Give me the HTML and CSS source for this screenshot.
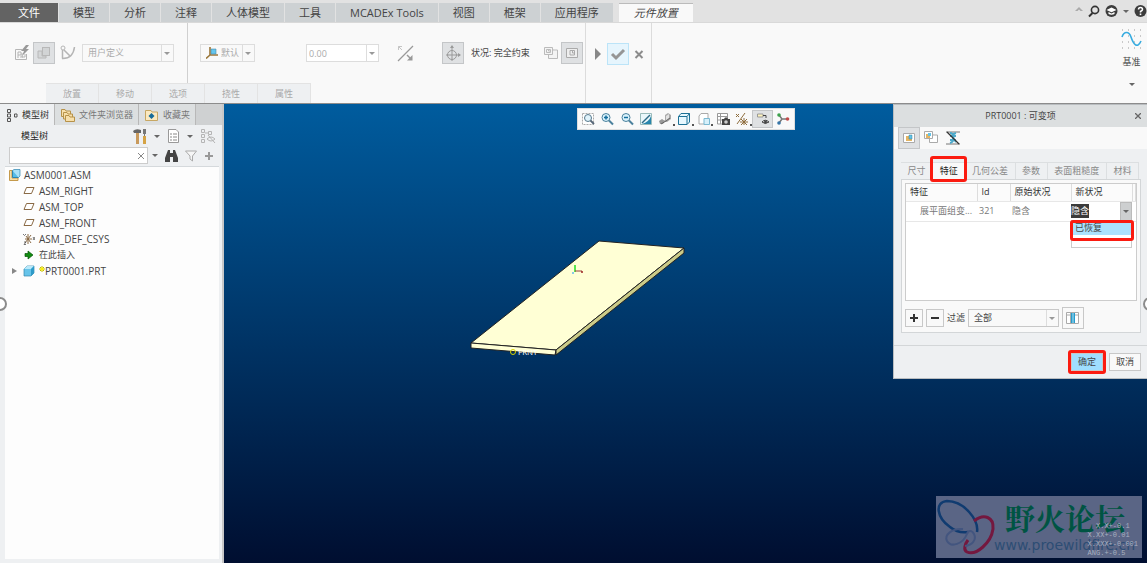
FILE: index.html
```html
<!DOCTYPE html>
<html lang="zh-CN">
<head>
  <meta charset="UTF-8">
  <meta name="viewport" content="width=device-width, initial-scale=1.0">
  <title>PRT0001 : 可变项</title>
  <link rel="stylesheet" href="styles.css">
</head>
<body>
  <header class="menubar">
    <nav class="menu">
      <button class="menu-tab file">文件</button>
      <button class="menu-tab">模型</button>
      <button class="menu-tab">分析</button>
      <button class="menu-tab">注释</button>
      <button class="menu-tab">人体模型</button>
      <button class="menu-tab">工具</button>
      <button class="menu-tab">MCADEx Tools</button>
      <button class="menu-tab">视图</button>
      <button class="menu-tab">框架</button>
      <button class="menu-tab">应用程序</button>
      <button class="menu-tab current">元件放置</button>
    </nav>
    <div class="menu-icons">
      <svg width="8" height="12"><path d="M0 6L4 2L8 6H5.500L4 4.500L2.500 6Z" fill="#aaa"/></svg>
      <svg width="12" height="14"><circle cx="7" cy="6" r="3.600" fill="none" stroke="#333" stroke-width="1.600"/><path d="M4.500 9L1 12.500" stroke="#333" stroke-width="2"/></svg>
      <svg width="13" height="14"><circle cx="6.500" cy="7" r="6" fill="#3c3c3c"/><path d="M1.500 6L6.500 3.500L11.500 6L6.500 8.300Z" fill="#fff"/><path d="M3.500 8V10Q6.500 11.500 9.500 10V8L6.500 9.500Z" fill="#fff"/></svg>
      <span class="arrow"></span>
      <svg width="13" height="14"><circle cx="6.500" cy="7" r="6" fill="#3c3c3c"/><path d="M4.500 5.500Q4.500 3.500 6.500 3.500T8.500 5.500Q8.500 6.500 6.500 7.500V8.500" fill="none" stroke="#fff" stroke-width="1.500"/><rect x="5.700" y="9.500" width="1.600" height="1.600" fill="#fff"/></svg>
    </div>
  </header>

  <section class="ribbon">
    <div class="placement">
      <div class="tools">
        <div class="group component">
          <svg width="16" height="16" fill="none" stroke="#b5b5b5"><path d="M1.500 4.500H8M1.500 4.500V14.500H12.500V9M4 7V13M4 7H7V10H4M8 8V12H11V9M6 12H9"/><path d="M12 0L7 6H10L8 11L15 4H12L15 0Z" fill="#999" stroke="none"/></svg>
          <button class="tool on" aria-label="界面放置"><svg width="16" height="16"><path d="M2 6H6V11H10V13H2Z" fill="#d5d7d8" stroke="#b8b8b8"/><rect x="6.500" y="2.500" width="7" height="8" fill="#d2d4d5" stroke="#b8b8b8"/></svg></button>
          <svg class="gap-s" width="16" height="16" fill="none" stroke="#b5b5b5"><circle cx="3" cy="3" r="2"/><path d="M2.500 5V13.500M4 5L10 11M2 13.500Q13 14 14.500 2" stroke-width="1.500"/></svg>
          <span class="combo user"><select disabled aria-label="约束集"><option>用户定义</option></select></span>
        </div>
        <div class="group constraint">
          <span class="combo auto">
            <svg width="12" height="12"><path d="M4 0V8L0 11.500M4 8H12" fill="none" stroke="#9a7638" stroke-width="1.600"/><path d="M5 2H10V7H5Z" fill="#64c6ee" stroke="#4a8aa8" stroke-width=".6"/></svg>
            <select disabled aria-label="约束类型"><option>默认</option></select>
          </span>
          <span class="combo offset"><input type="text" value="0.00" disabled aria-label="偏移"></span>
          <svg class="flip" width="17" height="17" stroke="#999"><path d="M1 16L16 1" stroke-width="1.300"/><path d="M1.500 1.500L5 5M1.500 5V1.500H5" stroke="#c5c5c5" fill="none"/><path d="M10 10L14 14" stroke-width="1.500"/><path d="M15.500 10V15.500H10Z" fill="#999" stroke="none"/></svg>
          <button class="tool on" aria-label="3D 拖动器"><svg width="18" height="18" fill="none" stroke="#999"><circle cx="8" cy="11" r="4.500"/><path d="M8 2V17M2 11H16"/><path d="M6 4L8 1L10 4ZM14 9L17 11L14 13Z" fill="#999" stroke="none"/></svg></button>
          <span class="status">状况: 完全约束</span>
          <svg class="windows" width="16" height="16" fill="#f4f4f4" stroke="#bbb"><path d="M5.500 3.500H9L10 5H14.500V13.500H5.500Z"/><path d="M1.500 2.500H9.500V9.500H1.500Z"/><path d="M3.500 4.500H7.500V7.500H3.500ZM5.500 4.500V6H7.500"/></svg>
          <button class="tool on" aria-label="装配窗口"><svg width="16" height="16" fill="none" stroke="#aaa"><path d="M2.500 3.500H13.500V12.500H2.500Z" fill="#eee"/><path d="M6 5.500H10.500V10H6ZM8.500 5.500V8H10.500"/></svg></button>
        </div>
      </div>
      <div class="subtabs">
        <button disabled>放置</button>
        <button disabled>移动</button>
        <button disabled>选项</button>
        <button disabled>挠性</button>
        <button disabled>属性</button>
      </div>
    </div>
    <div class="confirm">
      <svg width="8" height="12"><path d="M1 0L7 6L1 12Z" fill="#888"/></svg>
      <button class="tool accept" aria-label="应用"><svg width="16" height="14"><path d="M2 7L6 11L14 3" fill="none" stroke="#959595" stroke-width="3"/></svg></button>
      <svg width="10" height="10"><path d="M1.500 2L8.500 9M8.500 2L1.500 9" stroke="#8c8c8c" stroke-width="2"/></svg>
    </div>
    <div class="datum">
      <svg width="21" height="20"><path d="M1 1H21M1 7H21M1 13H21M1 19H21" stroke="#999" stroke-dasharray="1 5"/><path d="M1 8C3 2 8 2 10 8S16 21 20 12" fill="none" stroke="#38ace0" stroke-width="1.600"/></svg>
      <span>基准</span>
      <span class="arrow"></span>
    </div>
  </section>

  <main class="workspace">
    <aside class="navigator">
      <div class="nav-tabs">
        <button class="nav-tab active"><svg width="12" height="14" fill="none" stroke="#555"><path d="M1.500 1.500H4.500V4.500H1.500ZM1.500 6H4.500V9H1.500ZM1.500 10.500H4.500V13.500H1.500ZM8.500 6H11V9H8.500Z"/></svg>模型树</button>
        <button class="nav-tab"><svg width="14" height="14" fill="#f7dfaa" stroke="#b79249"><path d="M.5 1.500H4L5 3H9.500V8.500H.5Z"/><path d="M2.500 4.500H6L7 6H11.500V11H2.500Z"/><path d="M4.500 7.500H8L9 9H13.500V13.500H4.500Z"/></svg>文件夹浏览器</button>
        <button class="nav-tab"><svg width="14" height="14"><path d="M.5 2.500H6L7 4H12.500V12.500H.5Z" fill="#fae9c0" stroke="#c7a763"/><path d="M6.500 5L9.500 8L6.500 11L3.500 8Z" fill="#176b99"/></svg>收藏夹</button>
      </div>
      <div class="tree-title">
        <span>模型树</span>
        <div class="tree-tools">
          <svg width="14" height="17"><path d="M3 3H6V16H3Z" fill="#c99a5c"/><path d="M0 3Q3 0 8 2V5H1Z" fill="#666"/><path d="M10 1H13V6H12V9H11V6H10Z" fill="#777"/><rect x="10" y="8" width="3" height="8" fill="#d5a344"/></svg>
          <span class="arrow"></span>
          <svg width="13" height="16"><path d="M1.500 1.500H9L11.500 4V14.500H1.500Z" fill="#fff" stroke="#999"/><path d="M3 6H5M6 6H10M3 9H5M6 9H10M3 12H5M6 12H10" stroke="#888"/></svg>
          <span class="arrow"></span>
          <svg width="16" height="16" fill="none" stroke="#b5b5b5"><path d="M1.500 1.500H4.500V4.500H1.500ZM1.500 6.500H4.500V9.500H1.500ZM1.500 11.500H4.500V14.500H1.500ZM8.500 3.500H11.500V6.500H8.500ZM5 5H8M7 11Q11 7 15 11Q11 15 7 11M8 7L15 15"/></svg>
        </div>
      </div>
      <div class="search">
        <input type="text" aria-label="搜索模型树">
        <svg class="clear" width="8" height="8"><path d="M1 1L7 7M7 1L1 7" stroke="#888"/></svg>
        <span class="arrow"></span>
        <svg width="13" height="12"><path d="M3 0H5V3H8V0H10L13 8V12H8V7H5V12H0V8Z" fill="#444"/></svg>
        <svg width="12" height="12"><path d="M.5 1H11.500L7.500 6V11L5 9V6Z" fill="#f6f6f6" stroke="#aaa"/></svg>
        <svg width="10" height="10"><path d="M5 1V9M1 5H9" stroke="#999" stroke-width="2"/></svg>
      </div>
      <ul class="tree">
        <li class="root"><svg width="12" height="12"><path d="M.5 1.500H3V9H9V11.500H.5Z" fill="#f5dfaa" stroke="#c59a4b"/><path d="M3.500 1.500H9.500V8.500H3.500Z" fill="#55bce7" stroke="#3084ad"/><path d="M3.500 1.500L5 .5H11V7L9.500 8.500" fill="#a8e1f7" stroke="#3084ad" stroke-width=".7"/></svg>ASM0001.ASM</li>
        <li><svg width="12" height="10"><path d="M3.500 1.500H11L8.500 7.500H1Z" fill="#fff" stroke="#8a6a45"/></svg>ASM_RIGHT</li>
        <li><svg width="12" height="10"><path d="M3.500 1.500H11L8.500 7.500H1Z" fill="#fff" stroke="#8a6a45"/></svg>ASM_TOP</li>
        <li><svg width="12" height="10"><path d="M3.500 1.500H11L8.500 7.500H1Z" fill="#fff" stroke="#8a6a45"/></svg>ASM_FRONT</li>
        <li><svg width="12" height="12" stroke="#8a6a45"><path d="M2 6H9M5 1V11M2 10L8 2M3 3L8 10"/><path d="M0 1L1.500 2.500L3 1M1 9H3L1 11.500H3M10 4L12 7M12 4L10 7" fill="none" stroke="#555" stroke-width=".8"/></svg>ASM_DEF_CSYS</li>
        <li class="insert"><svg width="12" height="10"><path d="M2 3.500H5V1L10 5L5 9V6.500H2Z" fill="#128c12" stroke="#075507" stroke-width=".7"/></svg>在此插入</li>
        <li class="part"><span class="expand"></span><svg width="12" height="12"><path d="M1 4L4 1H11V8L8 11H1Z" fill="#67c4ea" stroke="#3488ae" stroke-width=".7"/><path d="M1 4L4 1H11L8 4Z" fill="#b9e9fa"/><path d="M8 4L11 1V8L8 11Z" fill="#2e9bc9"/></svg><svg class="star" width="6" height="10"><path d="M3 0V6M0 3H6M1 1L5 5M5 1L1 5" stroke="#c4bb00"/><circle cx="3" cy="3" r="1.500" fill="#fff200"/></svg>PRT0001.PRT</li>
      </ul>
      <span class="grip left"></span>
    </aside>

    <section class="viewport">
      <div class="view-tools">
        <button aria-label="重新调整"><svg width="14" height="14"><path d="M1.500 1.500H12.500V12.500H1.500Z" fill="#fff" stroke="#aaa" stroke-dasharray="2 1"/><circle cx="7" cy="6" r="3.500" fill="#e0f3fb" stroke="#56788c"/><path d="M9.500 8.500L13 12" stroke="#567" stroke-width="1.800"/></svg></button>
        <button aria-label="放大"><svg width="14" height="14"><circle cx="6" cy="5.500" r="4" fill="#d9f2fc" stroke="#4b819d"/><path d="M9 8.500L13 12.500" stroke="#4b819d" stroke-width="2"/><path d="M4 5.500H8M6 3.500V7.500" stroke="#126d9d" stroke-width="1.500"/></svg></button>
        <button aria-label="缩小"><svg width="14" height="14"><circle cx="6" cy="5.500" r="4" fill="#d9f2fc" stroke="#4b819d"/><path d="M9 8.500L13 12.500" stroke="#4b819d" stroke-width="2"/><path d="M4 5.500H8" stroke="#126d9d" stroke-width="1.500"/></svg></button>
        <button aria-label="重画"><svg width="14" height="14"><path d="M1.500 1.500H12.500V12.500H1.500Z" fill="#eaf7fb" stroke="#9bb"/><path d="M12 4V12H3Q10 10 12 4" fill="#2785ad"/><path d="M3 11L11 3" stroke="#2c6a86" stroke-width="1.500"/></svg></button>
        <button class="more" aria-label="渲染"><svg width="14" height="14"><path d="M7 3L10 1L13 3V7L9 10H5L7 8Z" fill="#aaa"/><path d="M8 4L11 2V6L8 8Z" fill="#e2e2e2"/><path d="M1 9L4 7L7 9L5 12H2Z" fill="#999"/><path d="M3 12L8 9L12 6" stroke="#666" fill="none"/></svg></button>
        <button class="more" aria-label="显示样式"><svg width="14" height="14" fill="#e7f8ff" stroke="#1d7196"><path d="M1.500 4.500L4 1.500H12.500V10L10 12.500H1.500Z"/><path d="M1.500 4.500H10V12.500M10 4.500L12.500 1.500" fill="none"/></svg></button>
        <button class="more" aria-label="已保存方向"><svg width="14" height="14"><path d="M2 4L4 1.500H11V10L9 12H2Z" fill="#fff" stroke="#aaa"/><path d="M7 6.500H12.500V12.500H7Z" fill="#d7f0fa" stroke="#7bb9d2"/></svg></button>
        <button aria-label="视图管理器"><svg width="14" height="14"><path d="M1.500 1.500H11.500V12H1.500ZM1.500 4.500H11.500M1.500 8H7M4.500 1.500V12" fill="#fff" stroke="#999"/><path d="M6 7H8L9 5.500H11L12 7H14V13H6Z" fill="#444"/><circle cx="10" cy="10" r="1.800" fill="#ccc"/></svg></button>
        <button class="more" aria-label="基准显示"><svg width="14" height="14" stroke="#8e6d3d"><path d="M1 2L4 5M4 2L1 5M2 12L10 1M5 10H13M9 6V13M6 7L12 13M12 7L6 13"/></svg></button>
        <button class="on" aria-label="注释显示"><svg width="14" height="14"><path d="M1.500 2H7V5H1.500Z" fill="#fff4bd" stroke="#999"/><path d="M7 3.500H10V6M6 10Q9 6.500 13 10Q9 13 6 10" fill="none" stroke="#444"/><circle cx="9.500" cy="10" r="1.500" fill="#444"/></svg></button>
        <button aria-label="旋转中心"><svg width="14" height="14"><path d="M3 3L6 7L3 11M6 7H12" fill="none" stroke="#777" stroke-width="1.500"/><circle cx="3" cy="3" r="1.800" fill="#3ba14b"/><circle cx="3" cy="11" r="1.800" fill="#3675a8"/><circle cx="11.500" cy="7" r="1.800" fill="#c24b4b"/></svg></button>
      </div>

      <svg class="plate" width="220" height="122" viewBox="0 0 220 122">
        <path d="M3 106L131 4L216 11L88 113Z" fill="#ffffd5" stroke="#222"/>
        <path d="M3 106L88 113L87 118L3 111Z" fill="#ffffd5" stroke="#222"/>
        <path d="M88 113L216 11V16L88 118Z" fill="#cbcb88" stroke="#222"/>
        <path d="M107 35V28" stroke="#23e023" stroke-width="1.500"/>
        <path d="M107 34H114" stroke="#99413f"/>
        <circle cx="114" cy="35" r="1" fill="#9b2020"/>
        <circle cx="105" cy="36" r="1" fill="#61bde8"/>
        <circle cx="45" cy="115" r="2.500" fill="none" stroke="#d8d500"/>
        <text x="50" y="118" class="plate-label">FRNT</text>
      </svg>

      <div class="dialog" role="dialog" aria-label="可变项">
        <div class="dialog-title">
          <span>PRT0001 : 可变项</span>
          <button class="close" aria-label="关闭"><svg width="6" height="6"><path d="M0 0L6 6M6 0L0 6" stroke="#666" stroke-width="1.300"/></svg></button>
        </div>
        <div class="dialog-tools">
          <button class="tool on" aria-label="装配窗口"><svg width="16" height="16"><path d="M2.500 3.500H13.500V12.500H2.500Z" fill="#fff" stroke="#aaa"/><path d="M5 6H8V9H11V11H5Z" fill="#e4b564"/><path d="M8 5H11V9H8Z" fill="#63c3e8" stroke="#37809e" stroke-width=".5"/></svg></button>
          <button class="tool" aria-label="独立窗口"><svg width="16" height="16"><path d="M6.500 3.500H9L10 5H14.500V12.500H6.500Z" fill="#fff" stroke="#aaa"/><path d="M1.500 1.500H9.500V8.500H1.500Z" fill="#fff" stroke="#aaa"/><path d="M3 4H5V6H7V8H3Z" fill="#e4b564"/><path d="M5 3H8V6H5Z" fill="#63c3e8"/></svg></button>
          <button class="tool" aria-label="隐藏"><svg width="16" height="16"><path d="M1 2H15M1 14H15" stroke="#777"/><path d="M5 3Q8 3 8 6T11 12M11 3Q7 4 8 8T5 13M5 6H11M5 10H11" fill="none" stroke="#4ba9cb" stroke-width="2"/><path d="M2 2L14 14" stroke="#333" stroke-width="1.300"/></svg></button>
        </div>
        <div class="dialog-body">
          <div class="tabs">
            <button>尺寸</button>
            <button class="active marked">特征</button>
            <button>几何公差</button>
            <button>参数</button>
            <button>表面粗糙度</button>
            <button>材料</button>
          </div>
          <div class="pane">
            <div class="grid-box">
              <table class="features">
                <thead>
                  <tr><th class="name">特征</th><th class="id">Id</th><th class="old">原始状况</th><th class="new">新状况</th><th></th></tr>
                </thead>
                <tbody>
                  <tr>
                    <td class="name">展平面组变...</td><td>321</td><td>隐含</td>
                    <td class="state">
                      <div class="state-cell"><span class="selected">隐含</span><button aria-label="展开"><span class="arrow"></span></button></div>
                      <ul class="options marked"><li>已恢复</li></ul>
                    </td>
                    <td></td>
                  </tr>
                </tbody>
              </table>
            </div>
            <div class="filter">
              <button class="small" aria-label="添加"><svg width="8" height="8"><path d="M4 0V8M0 4H8" stroke="#333" stroke-width="2"/></svg></button>
              <button class="small" aria-label="移除"><svg width="8" height="8"><path d="M0 4H8" stroke="#333" stroke-width="2"/></svg></button>
              <label for="filter">过滤</label>
              <span class="combo all"><select id="filter"><option>全部</option></select></span>
              <button class="tool columns" aria-label="列"><svg width="14" height="12"><path d="M.5 .5H12.500V11.500H.5ZM.5 3H12.500M4.500 .5V11.500M8.500 .5V11.500" fill="#fff" stroke="#aaa"/><path d="M5 1H9V11H5Z" fill="#269bcb"/><path d="M7 1V11" stroke="#b4e3f5"/></svg></button>
            </div>
          </div>
        </div>
        <div class="dialog-buttons">
          <button class="ok marked">确定</button>
          <button>取消</button>
        </div>
      </div>
      <span class="grip right"></span>

      <div class="forum">
        <svg width="62" height="62" viewBox="0 0 62 62" fill="none">
          <path d="M41 36C43 24 28 5 11 5C-2 6 1 22 14 31C19 35 26 37 32 36" stroke="#103b70" stroke-width="2.500"/>
          <path d="M38 25C48 17 58 21 57 33C55 47 40 60 31 56C27 54 29 48 32 44" stroke="#74183f" stroke-width="3"/>
          <path d="M27 33C16 32 8 39 11 45C15 52 27 48 31 38C32 34 36 34 38 38C41 44 36 49 29 50" stroke="#43557f" stroke-width="2"/>
        </svg>
        <div class="forum-text">
          <strong>野火论坛</strong>
          <span>www.proewildfire.cn</span>
        </div>
        <pre class="tolerance">  X.X+-0.1
X.XX+-0.01
X.XXX+-0.001
ANG.+-0.5</pre>
      </div>
    </section>
  </main>
</body>
</html>
```

FILE: styles.css
```css
* {
  box-sizing: border-box;
}
body {
  margin: 0;
  height: 100vh;
  display: flex;
  flex-direction: column;
  overflow: hidden;
  font-family: "Open Sans", "Noto Sans CJK SC", sans-serif;
  font-size: 9px;
  line-height: 14px;
  color: #444;
  background: #f9f9f9;
}
button, input, select {
  font: inherit;
  color: inherit;
  margin: 0;
  padding: 0;
  border: 0;
  background: none;
  outline: none;
}
button {
  display: flex;
  align-items: center;
  justify-content: center;
  white-space: nowrap;
}
svg {
  display: block;
  flex: none;
}
ul {
  list-style: none;
  margin: 0;
  padding: 0;
}
.arrow {
  border: 3px solid transparent;
  border-top-color: #666;
  border-bottom: 0;
  flex: none;
}

/* menu */
.menubar {
  display: flex;
  justify-content: space-between;
  height: 23px;
  flex: none;
  background: #e2e2e2;
  border-bottom: 1px solid #d9d9d9;
}
.menu {
  display: flex;
  gap: 1px;
  padding-top: 3px;
}
.menu-tab {
  padding: 0 14px;
  height: 19px;
  font-size: 11px;
  background: #cdd1d3;
}
.menu-tab.file {
  padding: 0 18px;
  color: #fff;
  background: #636363;
}
.menu-tab.current {
  margin-left: 5px;
  padding: 0 15px;
  font-style: italic;
  background: #f9f9f9;
  border-top: 1px solid #bbb;
}
.menu-icons {
  display: flex;
  align-items: center;
  gap: 5px;
}

/* ribbon */
.ribbon {
  display: flex;
  height: 81px;
  flex: none;
  border-bottom: 1px solid #8c8c8c;
}
.placement {
  width: 586px;
  border-right: 1px solid #dcdcdc;
}
.tools {
  display: flex;
  height: 60px;
}
.group {
  display: flex;
  align-items: center;
}
.component {
  width: 188px;
  padding-left: 14px;
  gap: 3px;
  border-right: 1px solid #d0d0d0;
}
.component .combo {
  margin-left: 3px;
}
.gap-s {
  margin-left: 2px;
}
.constraint {
  flex: 1;
  padding-left: 12px;
}
.tool {
  width: 22px;
  height: 22px;
  flex: none;
}
.tool.on {
  background: #dfe1e3;
  border: 1px solid #c4c6c8;
}
.combo {
  position: relative;
  display: flex;
  align-items: center;
  height: 18px;
  padding-left: 5px;
  border: 1px solid #ddd;
  color: #aaa;
}
.combo select, .combo input {
  appearance: none;
  width: 100%;
  min-width: 0;
  height: 16px;
  opacity: 1;
}
.combo::before {
  content: "";
  position: absolute;
  right: 11px;
  top: 0;
  bottom: 0;
  border-left: 1px solid #ddd;
}
.combo::after {
  content: "";
  position: absolute;
  right: 3px;
  top: 7px;
  border: 3px solid transparent;
  border-top-color: #999;
  border-bottom: 0;
}
.user {
  width: 92px;
}
.auto {
  width: 55px;
  gap: 3px;
}
.offset {
  width: 73px;
  margin-left: 51px;
  padding-left: 2px;
  background: #fff;
}
.flip {
  margin: 0 28px 0 18px;
}
.status {
  margin: 0 13px 0 7px;
  white-space: nowrap;
}
.windows {
  margin-right: 2px;
}
.subtabs {
  display: flex;
  height: 20px;
  padding-left: 46px;
}
.subtabs button {
  width: 53px;
  color: #aaa;
  background: #eef0f2;
  border: 1px solid #e3e3e3;
  border-width: 1px 1px 0 0;
}
.confirm {
  display: flex;
  align-items: center;
  gap: 5px;
  width: 66px;
  padding: 0 0 18px 8px;
  border-right: 1px solid #dcdcdc;
}
.accept {
  background: #e6f5fd;
  border: 1px solid #bce4f8;
}
.datum {
  display: flex;
  flex-direction: column;
  align-items: center;
  gap: 6px;
  margin-left: auto;
  padding: 6px 5px 0 0;
}
.datum .arrow {
  margin-top: 8px;
}

/* model tree */
.workspace {
  display: flex;
  flex: 1;
  min-height: 0;
}
.navigator {
  position: relative;
  display: flex;
  flex-direction: column;
  width: 224px;
  flex: none;
  background: #eef0f2;
  border-right: 2px solid #c8c8c8;
}
.nav-tabs {
  display: flex;
  height: 21px;
  background: #cfd1d2;
}
.nav-tab {
  gap: 4px;
  padding: 0 5px 0 6px;
  color: #777;
  background: #dcdfe0;
  border-right: 1px solid #b8b8b8;
}
.nav-tab.active {
  color: #333;
  background: #eef0f2;
}
.tree-title {
  display: flex;
  align-items: center;
  justify-content: space-between;
  height: 22px;
  padding: 0 6px 0 21px;
  color: #222;
}
.tree-tools {
  display: flex;
  align-items: center;
  gap: 7px;
}
.search {
  display: flex;
  align-items: center;
  gap: 7px;
  height: 17px;
  padding: 0 8px 0 9px;
}
.search input {
  flex: 1;
  min-width: 0;
  height: 17px;
  margin-right: -18px;
  background: #fff;
  border: 1px solid #ccc;
}
.tree {
  flex: 1;
  margin: 2px 3px 4px 5px;
  padding-left: 18px;
  background: #fdfdfd;
  border-top: 1px solid #d5d9dc;
  font-size: 10px;
}
.tree li {
  display: flex;
  align-items: center;
  gap: 4px;
  height: 16px;
}
.tree .root {
  margin-left: -14px;
  gap: 3px;
}
.tree .insert {
  font-size: 9px;
}
.tree .part {
  margin-left: -11px;
}
.tree .star {
  margin-right: -4px;
}
.expand {
  border: 3px solid transparent;
  border-left: 5px solid #888;
  border-right: 0;
  margin-right: 2px;
}
.grip {
  position: absolute;
  top: 193px;
  width: 14px;
  height: 14px;
  border: 2px solid #8c8c8c;
  border-radius: 50%;
  background: #fff;
}
.grip.left {
  left: -7px;
}
.grip.right {
  right: -10px;
}

/* graphics area */
.viewport {
  position: relative;
  flex: 1;
  min-width: 0;
  overflow: hidden;
  background: linear-gradient(#005c9e, #000e30);
}
.view-tools {
  display: flex;
  width: 218px;
  height: 22px;
  margin: 4px auto 0;
  padding: 1px;
  background: #f9f9f9;
  border: 1px solid #ddd;
}
.view-tools button {
  position: relative;
  flex: 1;
}
.view-tools .on {
  background: #dfe1e3;
  border: 1px solid #c4c6c8;
}
.view-tools .more::after {
  content: "";
  position: absolute;
  right: 0;
  bottom: 2px;
  border: 1px solid #555;
}
.plate {
  position: absolute;
  left: 244px;
  top: 133px;
}
.plate-label {
  font-size: 8px;
  fill: #fff;
}

/* dialog */
.dialog {
  position: absolute;
  right: 0;
  top: 0;
  width: 254px;
  background: #eef0f2;
  border: 1px solid #b9bdc0;
  border-right: 0;
}
.dialog-title {
  display: flex;
  align-items: center;
  height: 22px;
  padding: 0 6px 0 12px;
  background: #dcdfe0;
}
.dialog-title span {
  flex: 1;
  text-align: center;
}
.dialog-tools {
  display: flex;
  height: 22px;
  padding-left: 4px;
  background: #f9f9f9;
}
.dialog-body {
  padding: 13px 6px 12px 7px;
}
.tabs {
  display: flex;
  height: 17px;
  padding-right: 2px;
}
.tabs button {
  flex: auto;
  color: #888;
  border: 1px solid #dcdfe1;
  border-left: 0;
  border-bottom: 0;
}
.tabs .active {
  color: #222;
  background: #f9f9f9;
}
.marked {
  position: relative;
}
.marked::after {
  content: "";
  position: absolute;
  border: 3px solid #fb1b10;
  border-radius: 3px;
}
.tabs .marked::after {
  inset: -7px -3px -3px;
}
.pane {
  padding: 3px;
  background: #f9f9f9;
  border: 1px solid #d3d6d8;
}
.grid-box {
  height: 118px;
  background: #fff;
  border: 1px solid #ccc;
}
.features {
  width: 100%;
  border-collapse: collapse;
  table-layout: fixed;
}
.features th, .features td {
  height: 17px;
  padding: 0 0 0 4px;
  text-align: left;
  font-weight: normal;
  white-space: nowrap;
  border-bottom: 1px solid #e7e7e7;
}
.features th {
  color: #333;
  border-right: 1px solid #ddd;
  background: #fbfbfb;
}
.features td {
  height: 20px;
  padding-left: 2px;
  color: #777;
}
.features .name {
  width: 71px;
}
.features .id {
  width: 33px;
}
.features .old {
  width: 61px;
}
.features .new {
  width: 61px;
}
.features td.name {
  padding-left: 14px;
}
.features .state {
  position: relative;
  padding: 0;
}
.state-cell {
  display: flex;
  align-items: center;
  justify-content: space-between;
}
.state-cell button {
  width: 12px;
  height: 19px;
  background: #cdcfd0;
  border: 1px solid #bbb;
}
.selected {
  color: #fff;
  background: #3b3b3b;
}
.options {
  position: absolute;
  top: 18px;
  left: 0;
  right: 0;
  height: 28px;
  background: #fff;
  border: 1px solid #ccc;
}
.options li {
  height: 14px;
  padding-left: 3px;
  color: #444;
  background: #abe2fd;
}
.options.marked::after {
  inset: -1px -3px 6px -2px;
}
.filter {
  display: flex;
  align-items: center;
  gap: 3px;
  padding-top: 6px;
}
.small {
  width: 18px;
  height: 18px;
  border: 1px solid #c8c8c8;
}
.filter .combo {
  color: #444;
  border-color: #c8c8c8;
}
.all {
  width: 91px;
}
.filter .tool {
  border: 1px solid #c8c8c8;
}
.dialog-buttons {
  display: flex;
  justify-content: flex-end;
  gap: 6px;
  height: 33px;
  padding: 7px 6px;
  border-top: 1px solid #d3d6d8;
}
.dialog-buttons button {
  width: 32px;
  height: 18px;
  background: #f9f9f9;
  border: 1px solid #c8c8c8;
}
.dialog-buttons .ok {
  background: #9fdeff;
}
.dialog-buttons .marked::after {
  inset: -4px;
}

/* forum mark */
.forum {
  position: absolute;
  right: 5px;
  bottom: 5px;
  display: flex;
  width: 206px;
  height: 62px;
  background: #5a6585;
}
.forum-text {
  display: flex;
  flex-direction: column;
  margin-left: -4px;
}
.forum strong {
  padding: 2px 0 0 11px;
  font-size: 30px;
  line-height: 38px;
  font-family: "Noto Serif CJK SC", "Noto Sans CJK SC", serif;
  color: #005443;
}
.forum span {
  font-family: "DejaVu Sans", sans-serif;
  font-size: 14px;
  line-height: 18px;
  color: #2d4d74;
}
.tolerance {
  position: absolute;
  right: 4px;
  bottom: 0;
  margin: 0;
  font-family: "Liberation Mono", monospace;
  font-size: 7px;
  line-height: 9px;
  color: #a8b0c0;
}
```
